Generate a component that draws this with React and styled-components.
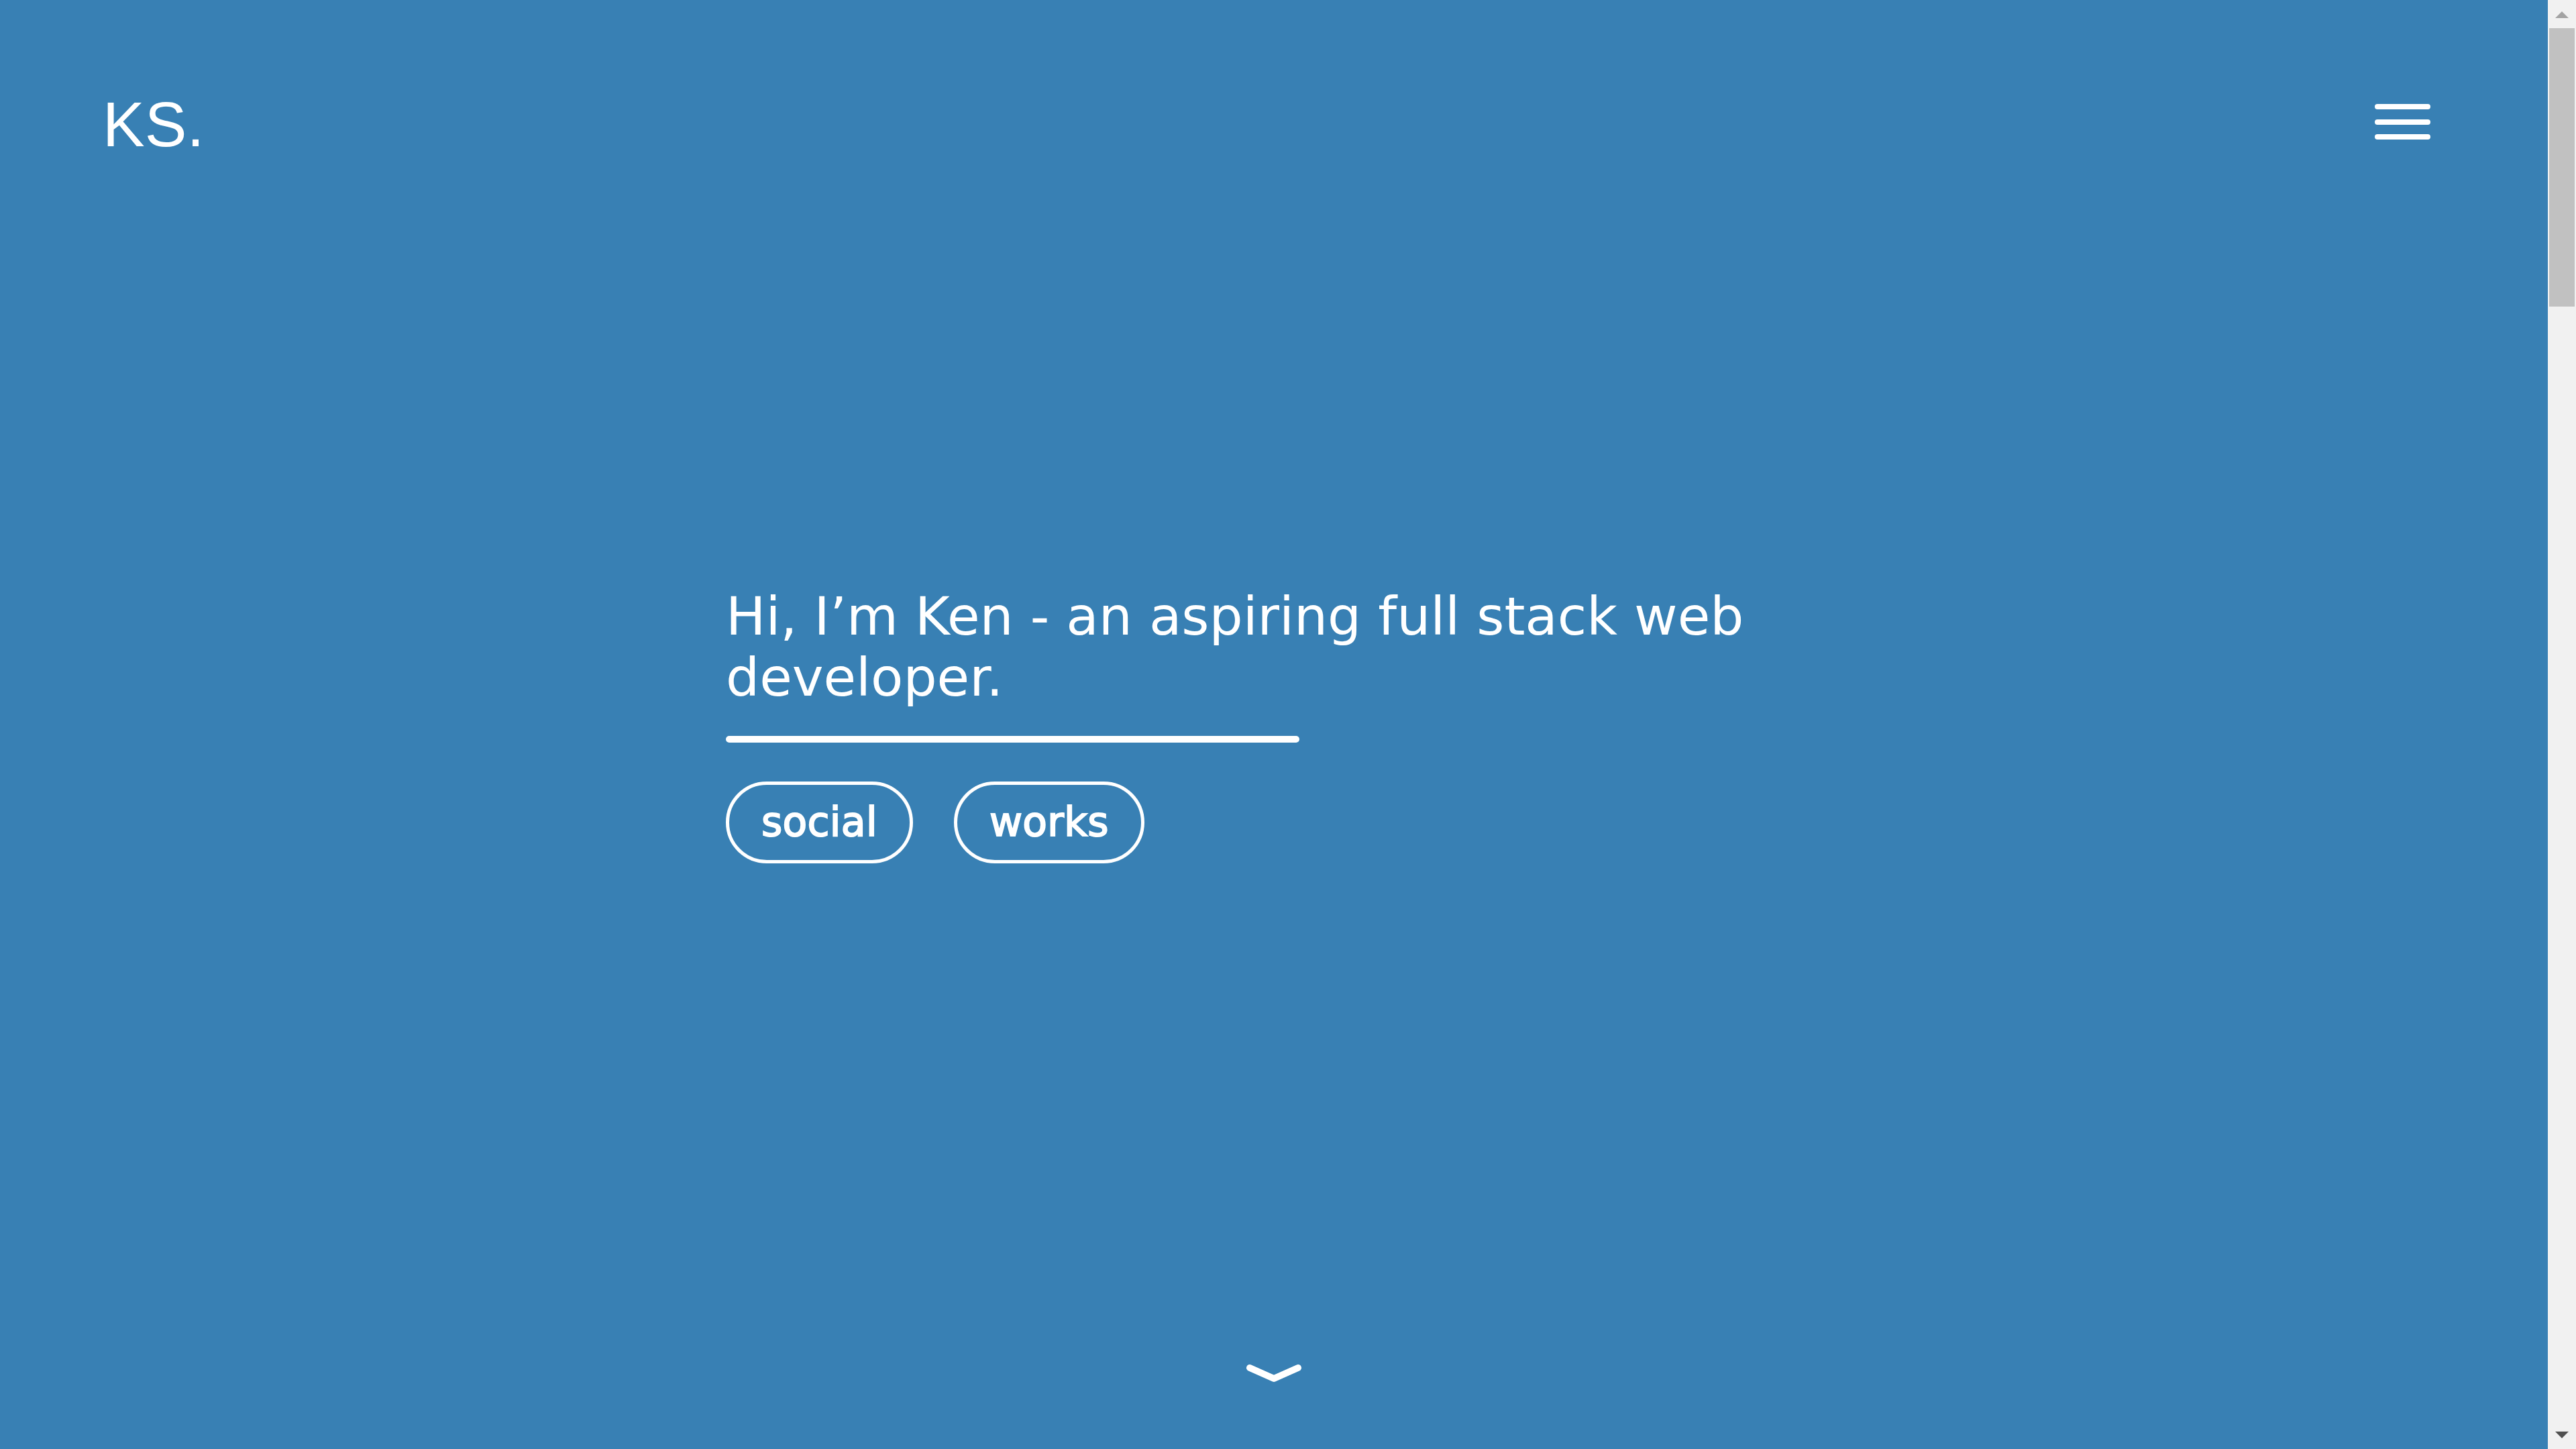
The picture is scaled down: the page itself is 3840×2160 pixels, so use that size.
import React from "react";
import styled, { createGlobalStyle } from "styled-components";

const BLUE = "#3880b4";
const BAR = 42;

const GlobalStyle = createGlobalStyle`
  html, body {
    margin: 0;
    padding: 0;
    background: ${BLUE};
  }
  body {
    font-family: "DejaVu Sans", sans-serif;
  }
  *, *::before, *::after { box-sizing: border-box; }
`;

const Page = styled.div`
  background: ${BLUE};
  color: #fff;
  margin-right: ${BAR}px;
`;

const Header = styled.header`
  position: fixed;
  top: 0;
  left: 0;
  right: ${BAR}px;
  display: flex;
  justify-content: space-between;
  align-items: flex-start;
  padding: 132px 175px 0 153px;
  z-index: 10;
`;

const Logo = styled.a`
  font-family: "Liberation Sans", Arial, sans-serif;
  font-size: 94px;
  font-weight: 400;
  color: #fff;
  text-decoration: none;
  line-height: normal;
`;

const MenuButton = styled.button`
  margin-top: 23px;
  display: flex;
  flex-direction: column;
  gap: 14.5px;
  padding: 0;
  border: 0;
  background: transparent;
  cursor: pointer;
`;

const MenuLine = styled.span`
  display: block;
  width: 83px;
  height: 8px;
  border-radius: 4px;
  background: #fff;
`;

const Hero = styled.section`
  height: 100vh;
  display: grid;
  grid-template-rows: 1fr auto 1fr;
`;

const Intro = styled.div`
  grid-row: 2;
  width: 100%;
  max-width: 1634px;
  margin: 0 auto;
`;

const Headline = styled.h1`
  margin: 0;
  font-family: "DejaVu Sans", sans-serif;
  font-weight: 400;
  font-size: 79px;
  line-height: 91px;
  color: #fff;
`;

const Rule = styled.div`
  width: 855px;
  height: 10px;
  border-radius: 5px;
  background: #fff;
  margin-top: 41px;
`;

const ButtonRow = styled.div`
  display: flex;
  gap: 61px;
  margin-top: 58px;
`;

const Pill = styled.a`
  display: inline-block;
  border: 5px solid #fff;
  border-radius: 61px;
  padding: 20px 48px 22px;
  font-family: "DejaVu Sans", sans-serif;
  font-weight: 400;
  font-size: 60px;
  line-height: 70px;
  letter-spacing: 0.3px;
  color: #fff;
  -webkit-text-stroke: 2px #fff;
  text-decoration: none;
`;

const ScrollHint = styled.a`
  grid-row: 3;
  align-self: end;
  justify-self: center;
  display: block;
  line-height: 0;
  margin-bottom: 97px;
`;

const Section = styled.section`
  min-height: ${(p) => p.$h}px;
  background: ${BLUE};
`;

const ScrollBar = styled.div`
  position: fixed;
  top: 0;
  right: 0;
  bottom: 0;
  width: ${BAR}px;
  background: #f1f1f1;
  display: flex;
  flex-direction: column;
  z-index: 20;
`;

const ScrollArrow = styled.div`
  height: ${BAR}px;
  display: flex;
  align-items: center;
  justify-content: center;
  padding-top: ${(p) => (p.$up ? 2 : 0)}px;
  &::before {
    content: "";
    width: 0;
    height: 0;
    border-left: 10px solid transparent;
    border-right: 10px solid transparent;
    ${(p) =>
      p.$up
        ? "border-bottom: 10px solid #a3a3a3;"
        : "border-top: 10px solid #505050;"}
  }
`;

const ScrollThumb = styled.div`
  height: 415px;
  margin: 0 2px;
  background: #c1c1c1;
`;

const ScrollTrack = styled.div`
  flex: 1;
`;

export default function App() {
  return (
    <Page>
      <GlobalStyle />
      <Header>
        <Logo href="#">KS.</Logo>
        <MenuButton aria-label="menu">
          <MenuLine />
          <MenuLine />
          <MenuLine />
        </MenuButton>
      </Header>
      <Hero>
        <Intro>
          <Headline>Hi, I’m Ken - an aspiring full stack web developer.</Headline>
          <Rule />
          <ButtonRow>
            <Pill href="#social">social</Pill>
            <Pill href="#works">works</Pill>
          </ButtonRow>
        </Intro>
        <ScrollHint href="#about" aria-label="scroll down">
          <svg width="84" height="30" viewBox="0 0 84 30">
            <polyline
              points="6,6 42,22 78,6"
              fill="none"
              stroke="#fff"
              strokeWidth="10"
              strokeLinecap="round"
              strokeLinejoin="round"
            />
          </svg>
        </ScrollHint>
      </Hero>
      <Section id="about" $h={2880} />
      <Section id="social" $h={2880} />
      <Section id="works" $h={2880} />
      <ScrollBar aria-hidden="true">
        <ScrollArrow $up />
        <ScrollThumb />
        <ScrollTrack />
        <ScrollArrow />
      </ScrollBar>
    </Page>
  );
}
